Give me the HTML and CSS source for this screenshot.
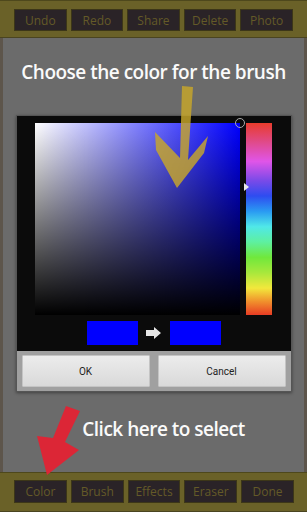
FILE: index.html
```html
<!DOCTYPE html>
<html lang="en">
<head>
    <meta charset="UTF-8">
    <meta name="viewport" content="width=device-width, initial-scale=1.0">
    <title>Paint - Color</title>
    <link rel="stylesheet" href="styles.css">
</head>
<body>
    <div class="screen">
        <div class="toolbar">
            <div class="tool">Undo</div>
            <div class="tool">Redo</div>
            <div class="tool">Share</div>
            <div class="tool">Delete</div>
            <div class="tool">Photo</div>
        </div>

        <div class="main">
            <div class="hint top-hint">Choose the color for the brush</div>

            <div class="dialog">
                <div class="picker">
                    <div class="picker-row">
                        <div class="sat-val">
                            <span class="sv-cursor"></span>
                        </div>
                        <div class="hue">
                            <span class="hue-cursor"></span>
                        </div>
                    </div>
                    <div class="swatches">
                        <div class="swatch"></div>
                        <svg class="swap" width="16" height="12" viewBox="0 0 16 12">
                            <polygon points="0,3 8,3 8,0 15,6 8,12 8,9 0,9" fill="#e6e6e6"/>
                        </svg>
                        <div class="swatch"></div>
                    </div>
                </div>
                <div class="dialog-buttons">
                    <button class="dlg-btn">OK</button>
                    <button class="dlg-btn">Cancel</button>
                </div>
            </div>

            <div class="hint bottom-hint">Click here to select</div>
        </div>

        <div class="toolbar bottom">
            <div class="tool">Color</div>
            <div class="tool">Brush</div>
            <div class="tool">Effects</div>
            <div class="tool">Eraser</div>
            <div class="tool">Done</div>
        </div>

        <!-- tutorial arrows drawn over the screen -->
        <svg class="arrows" width="307" height="512" viewBox="0 0 307 512">
            <polygon class="gold" points="182,86 193,87 188,160 208,136 204,153 177,188 156,150 155,132 180,158"/>
            <polygon class="red" points="66,406 80,411 65,442 79,450 47,475 37,436 53,438"/>
        </svg>
    </div>
</body>
</html>
```

FILE: styles.css
```css
body {
    margin: 0;
    background: #6b6b6b;
    font-family: "Open Sans", sans-serif;
}
.screen {
    position: relative;
    width: 307px;
    height: 512px;
    display: flex;
    flex-direction: column;
    overflow: hidden;
}
.toolbar {
    height: 38px;
    box-sizing: border-box;
    padding: 8px 14px 6px;
    display: flex;
    gap: 4px;
    background: #6a6128;
    border-top: 1px solid #4e481c;
    border-bottom: 1px solid #4a4420;
}
.toolbar.bottom {
    height: 40px;
    padding: 7px 13px 8px 14px;
}
.tool {
    flex: 1;
    display: flex;
    align-items: center;
    justify-content: center;
    background: #2a2327;
    border: 1px solid #3c3618;
    color: #645a28;
    font-size: 12px;
}
.main {
    flex: 1;
    display: flex;
    flex-direction: column;
    align-items: center;
    border-left: 3px solid #5d554b;
    border-right: 3px solid #5d554b;
    background: #6b6b6b;
}
.hint {
    color: #fafafa;
    font-size: 19px;
    font-weight: 600;
    letter-spacing: -0.5px;
    white-space: nowrap;
}
.top-hint {
    margin-top: 21px;
    height: 26px;
}
.dialog {
    margin-top: 30px;
    width: 274px;
    border: 1px solid #555;
    box-shadow: 0 1px 3px rgba(0, 0, 0, 0.4);
}
.picker {
    background: #0b0b0b;
    padding: 7px 17px 6px 18px;
}
.picker-row {
    display: flex;
    gap: 6px;
}
.sat-val {
    position: relative;
    width: 205px;
    height: 192px;
    background: linear-gradient(to bottom, rgba(0, 0, 0, 0), #000),
                linear-gradient(to right, #fff, #0000ff);
}
.sv-cursor {
    position: absolute;
    right: -5px;
    top: -5px;
    width: 8px;
    height: 8px;
    border: 1px solid #aaa;
    border-radius: 50%;
}
.hue {
    position: relative;
    width: 26px;
    height: 192px;
    background: linear-gradient(to bottom, #e83c2c 0%, #e04a8a 10%, #e055e8 20%,
        #7a4ae8 30%, #2e4cf0 38%, #2a9af2 46%, #50e8e8 54%, #5ef0a0 62%,
        #70e83c 70%, #a8e83c 78%, #f2e83c 86%, #f0902c 93%, #e83c24 100%);
}
.hue-cursor {
    position: absolute;
    left: -2px;
    top: 60px;
    width: 0;
    height: 0;
    border-top: 4px solid transparent;
    border-bottom: 4px solid transparent;
    border-left: 5px solid #e8e8e8;
}
.swatches {
    display: flex;
    justify-content: center;
    align-items: center;
    gap: 8px;
    margin-top: 6px;
}
.swatch {
    width: 51px;
    height: 24px;
    background: #0000ff;
}
.swap {
    display: block;
}
.dialog-buttons {
    display: flex;
    gap: 8px;
    padding: 4px 5px 4px;
    background: #a0a0a0;
}
.dlg-btn {
    flex: 1;
    height: 32px;
    border: 1px solid #c4c4c4;
    border-radius: 1px;
    background: linear-gradient(#ececec, #d9d9d9);
    font-family: Roboto, sans-serif;
    font-size: 10px;
    color: #222;
}
.bottom-hint {
    margin-top: 24px;
    margin-left: 20px;
}
.arrows {
    position: absolute;
    left: 0;
    top: 0;
    pointer-events: none;
}
.gold {
    fill: #c8a72a;
    opacity: 0.82;
}
.red {
    fill: #dc2636;
}
```
